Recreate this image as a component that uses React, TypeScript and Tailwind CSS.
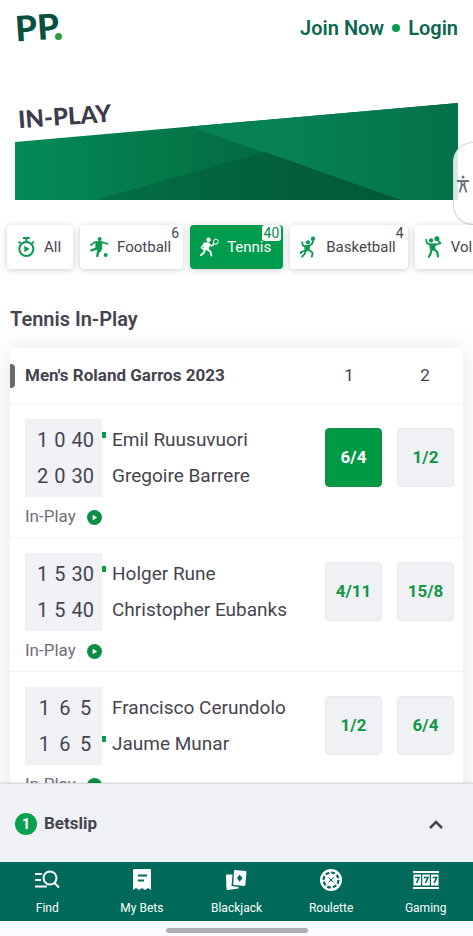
import { useState } from "react";
import type { ReactNode } from "react";

type Player = {
  name: string;
  score: string[];
  odds: string;
  serving?: boolean;
};

type Match = {
  id: string;
  players: Player[];
};

const matches: Match[] = [
  {
    id: "m1",
    players: [
      { name: "Emil Ruusuvuori", score: ["1", "0", "40"], odds: "6/4", serving: true },
      { name: "Gregoire Barrere", score: ["2", "0", "30"], odds: "1/2" },
    ],
  },
  {
    id: "m2",
    players: [
      { name: "Holger Rune", score: ["1", "5", "30"], odds: "4/11", serving: true },
      { name: "Christopher Eubanks", score: ["1", "5", "40"], odds: "15/8" },
    ],
  },
  {
    id: "m3",
    players: [
      { name: "Francisco Cerundolo", score: ["1", "6", "5"], odds: "1/2" },
      { name: "Jaume Munar", score: ["1", "6", "5"], odds: "6/4", serving: true },
    ],
  },
];

function StopwatchIcon() {
  return (
    <svg viewBox="0 0 57 60" className="w-[19px] h-5" fill="none" stroke="currentColor" strokeWidth="6">
      <circle cx="28" cy="36" r="21" />
      <path d="M18 3h20M28 3v12M5 14l6 5M51 14l-6 5" />
      <path d="M22 26l16 10-16 10z" fill="currentColor" stroke="none" />
    </svg>
  );
}

function FootballIcon() {
  return (
    <svg viewBox="0 0 57 60" className="w-[19px] h-5" fill="none" stroke="currentColor" strokeLinecap="round" strokeLinejoin="round">
      <circle cx="29" cy="6" r="6" fill="currentColor" stroke="none" />
      <path d="M3 24l10-8 22-1 18 6" strokeWidth="5" />
      <path d="M18 14h18l-1 22-17 2z" fill="currentColor" strokeWidth="2" />
      <path d="M21 34L4 40M29 34l-5 10-2 13M32 34l-2 8" strokeWidth="7" />
      <circle cx="47" cy="54" r="6" fill="currentColor" stroke="none" />
    </svg>
  );
}

function TennisIcon() {
  return (
    <svg viewBox="0 0 60 60" className="w-[19px] h-5" fill="none" stroke="currentColor" strokeLinecap="round" strokeLinejoin="round">
      <circle cx="27" cy="7" r="7" fill="currentColor" stroke="none" />
      <path d="M13 17l14-1 4 8-6 16-13-3z" fill="currentColor" strokeWidth="2" />
      <path d="M13 19L4 32l7 5M28 20l8 7 6-6" strokeWidth="4" />
      <path d="M16 36l-4 12-9 8M24 38l9 7 3 12" strokeWidth="6" />
      <ellipse cx="50" cy="13" rx="7" ry="8" strokeWidth="3" transform="rotate(25 50 13)" />
      <path d="M46 19l-5 7" strokeWidth="3" />
    </svg>
  );
}

function BasketballIcon() {
  return (
    <svg viewBox="0 0 50 60" className="w-[18px] h-[22px]" fill="none" stroke="currentColor" strokeLinecap="round" strokeLinejoin="round">
      <circle cx="36" cy="7" r="6" fill="currentColor" stroke="none" />
      <circle cx="22" cy="17" r="6" fill="currentColor" stroke="none" />
      <path d="M6 17l2 9 12 2 12-5 5-9" strokeWidth="5" />
      <path d="M14 27l14-1-3 14-11 2z" fill="currentColor" strokeWidth="2" />
      <path d="M17 39L3 44l-1 3M24 38l11 8-2 11M16 38l-2 10-8 9" strokeWidth="5" />
    </svg>
  );
}

function VolleyballIcon() {
  return (
    <svg viewBox="0 0 50 60" className="w-[18px] h-[22px]" fill="none" stroke="currentColor" strokeLinecap="round" strokeLinejoin="round">
      <circle cx="33" cy="7" r="7" fill="currentColor" stroke="none" />
      <circle cx="17" cy="12" r="6" fill="currentColor" stroke="none" />
      <path d="M3 10l3 10 12 4 14-1 11-4-5-5" strokeWidth="5" />
      <path d="M13 22l16-1-2 17-11 2z" fill="currentColor" strokeWidth="2" />
      <path d="M18 38l-2 9-5 10M25 36l9 8 2 12" strokeWidth="6" />
    </svg>
  );
}

const sports: { name: string; count?: number; icon: ReactNode }[] = [
  { name: "All", icon: <StopwatchIcon /> },
  { name: "Football", count: 6, icon: <FootballIcon /> },
  { name: "Tennis", count: 40, icon: <TennisIcon /> },
  { name: "Basketball", count: 4, icon: <BasketballIcon /> },
  { name: "Volleyball", icon: <VolleyballIcon /> },
];

const navItems: { name: string; icon: ReactNode }[] = [
  {
    name: "Find",
    icon: (
      <svg viewBox="0 0 26 22" className="w-[26px] h-[22px]" fill="none" stroke="currentColor" strokeWidth="2">
        <circle cx="16" cy="9" r="6.5" />
        <path d="M20.5 14l4.500 4.500M1 5h7M1 11h6M1 17.500h12" />
      </svg>
    ),
  },
  {
    name: "My Bets",
    icon: (
      <svg viewBox="0 0 18 22" className="w-[18px] h-[22px]" fill="currentColor">
        <path d="M1 0h16a1 1 0 0 1 1 1v20l-3-2-3 2-3-2-3 2-3-2-3 2V1a1 1 0 0 1 1-1z" />
        <path d="M5 6.5h9M5 11.5h6" stroke="#006a5a" strokeWidth="1.8" />
      </svg>
    ),
  },
  {
    name: "Blackjack",
    icon: (
      <svg viewBox="0 0 22 22" className="w-[22px] h-[22px]" fill="currentColor">
        <path d="M2 5.5h5.5l-1 11.5 7 1v1.5l-11 1.5a1 1 0 0 1-1-1L1 6.5a1 1 0 0 1 1-1z" />
        <path d="M9.5 1l11 1a1 1 0 0 1 1 1l-1.2 13a1 1 0 0 1-1 1l-10-1a1 1 0 0 1-1-1l.7-13a1 1 0 0 1 .5-1z" />
        <path d="M14.8 5.5l2.7 3.7-2.9 3.5-2.6-3.7z" fill="#006a5a" />
      </svg>
    ),
  },
  {
    name: "Roulette",
    icon: (
      <svg viewBox="0 0 22 22" className="w-[22px] h-[22px]" fill="none">
        <circle cx="11" cy="11" r="11" fill="currentColor" />
        <circle cx="11" cy="11" r="7.5" stroke="#006a5a" strokeWidth="2.2" strokeDasharray="3.9 1.99" />
        <path d="M8.5 8.5l5 5M13.5 8.5l-5 5" stroke="#006a5a" strokeWidth="1" />
        <circle cx="11" cy="11" r="1.2" fill="#006a5a" />
      </svg>
    ),
  },
  {
    name: "Gaming",
    icon: (
      <svg viewBox="0 0 26 20" className="w-[26px] h-[22px]" fill="currentColor">
        <path d="M0 1h26v2H0zM0 17h26v2H0zM.5 4.5h7.5v11H.5zM9.2 4.5h7.6v11H9.2zM18 4.5h7.5v11H18z" />
        <path d="M2 7.500h4l-2.5 5.5M11 7.5h4l-2.5 5.5M19.700 7.500h4l-2.5 5.5" fill="none" stroke="#006a5a" strokeWidth="1.600" />
      </svg>
    ),
  },
];

function Banner() {
  return (
    <section className="relative px-[15px] pt-[47px]">
      <h1 className="absolute left-[18px] top-11 -rotate-4 font-[Lato,sans-serif] text-2xl font-black text-[#3d3b49]">
        IN-PLAY
      </h1>
      <svg viewBox="0 0 443 97" preserveAspectRatio="none" className="block w-full h-[97px]">
        <defs>
          <linearGradient id="left">
            <stop offset="0" stopColor="#048a58" />
            <stop offset="0.35" stopColor="#047749" />
            <stop offset="0.6" stopColor="#04673f" />
          </linearGradient>
          <linearGradient id="right">
            <stop offset="0" stopColor="#068253" />
            <stop offset="0.4" stopColor="#068153" />
            <stop offset="1" stopColor="#047149" />
          </linearGradient>
          <linearGradient id="floor">
            <stop offset="0" stopColor="#036f45" />
            <stop offset="0.6" stopColor="#025f39" />
            <stop offset="1" stopColor="#025a36" />
          </linearGradient>
        </defs>
        <path d="M0 39L443 0v97H0z" fill="url(#left)" />
        <path d="M175 23.6L443 0v97H385z" fill="url(#right)" />
        <path d="M80 97L250 49l136 48z" fill="url(#floor)" />
      </svg>

      <button
        aria-label="Accessibility"
        className="absolute right-0 top-[86px] w-5 h-[83px] pr-0.5 rounded-l-[20px] border border-r-0 border-gray-300 bg-white/85 flex items-center justify-center text-gray-500"
      >
        <svg viewBox="0 0 12 18" className="shrink-0 w-3 h-[18px]" fill="none" stroke="currentColor" strokeWidth="1.8">
          <circle cx="6" cy="2" r="1.5" fill="currentColor" stroke="none" />
          <path d="M0 6h12M4.5 6v5l-2 6.5M7.5 6v5l2 6.5M4.5 10h3" />
        </svg>
      </button>
    </section>
  );
}

function OddsButton({ label, odds, selected, onClick }: { label: string; odds: string; selected: boolean; onClick: () => void }) {
  return (
    <button
      onClick={onClick}
      aria-label={`${label} ${odds}`}
      aria-pressed={selected}
      className={`w-[57px] h-[59px] rounded border text-[17px] font-bold ${
        selected ? "bg-[#009a44] border-[#158a48] text-white" : "bg-[#f0f1f5] border-[#e9e9ed] text-[#129648]"
      }`}
    >
      {odds}
    </button>
  );
}

export default function App() {
  const [sport, setSport] = useState("Tennis");
  const [picked, setPicked] = useState("m1-0");

  return (
    <div className="h-screen flex flex-col bg-white font-[Roboto,sans-serif] text-[#45444f]">
      <main className="flex-1 min-h-0 overflow-x-hidden overflow-y-auto [scrollbar-width:none]">
        <header className="h-14 px-[15px] flex items-center justify-between">
          <a href="#" aria-label="Home" className="pb-1 flex items-end text-[#06503f]">
            <span className="-rotate-4 font-[Lato,sans-serif] text-[35px] leading-10 font-black">PP</span>
            <span className="-ml-1 mb-1.5 w-[7px] h-[7px] rounded-full bg-[#2f9a41]" />
          </a>
          <div className="flex items-center gap-2 text-xl font-semibold text-[#0b6650]">
            <a href="#">Join Now</a>
            <span className="w-2 h-2 rounded-full bg-[#0a9c50]" />
            <a href="#">Login</a>
          </div>
        </header>

        <Banner />

        {/* sports */}
        <div className="mt-[25px] pl-[7px] flex gap-[7px]">
          {sports.map((s) => (
            <button
              key={s.name}
              onClick={() => setSport(s.name)}
              className={`relative shrink-0 h-11 pl-2.5 pr-3 rounded flex items-center gap-2 text-[15px] shadow-[0_1px_6px_rgba(0,0,0,0.2)] ${
                sport === s.name ? "bg-[#009c4d] text-white" : "bg-white text-[#45444f]"
              }`}
            >
              <span className={sport === s.name ? "text-white" : "text-[#0b9a50]"}>{s.icon}</span>
              {s.name}
              {s.count && (
                <span
                  className={`absolute right-0.5 top-0 px-0.5 rounded-[3px] text-sm leading-4 ${
                    sport === s.name ? "bg-white text-[#0b8a4a]" : ""
                  }`}
                >
                  {s.count}
                </span>
              )}
            </button>
          ))}
        </div>

        <h2 className="mt-9 mb-[15px] px-2.5 text-xl leading-7 font-semibold">Tennis In-Play</h2>

        <section className="mx-2.5 rounded bg-white shadow-[0_0_24px_rgba(0,0,0,0.1)]">
          <div className="h-14 pr-2 flex items-center border-b border-[#f3f3f5]">
            <span className="w-[5px] h-6 rounded-r bg-[#6b6b6b]" />
            <h3 className="flex-1 pl-2.5 text-[17px] font-bold">Men's Roland Garros 2023</h3>
            <div className="flex gap-4 text-[17px] text-center">
              <span className="w-[60px]">1</span>
              <span className="w-[60px]">2</span>
            </div>
          </div>

          {matches.map((m) => (
            <article key={m.id} className="h-[134px] pl-[15px] pr-[9px] pt-[15px] flex border-b border-[#f3f3f5]">
              <div className="flex-1">
                <div className="flex">
                  <div className="w-[77px] h-[78px] pl-[9px] pr-1.5 py-[3px] bg-[#f2f1f6]">
                    <table className="w-full text-xl text-center">
                      <tbody>
                        {m.players.map((p) => (
                          <tr key={p.name} className="h-9">
                            {p.score.map((n, i) => (
                              <td key={i} className="px-[3px]">
                                {n}
                              </td>
                            ))}
                          </tr>
                        ))}
                      </tbody>
                    </table>
                  </div>
                  <ul className="py-[3px] text-[19px] leading-9">
                    {m.players.map((p) => (
                      <li key={p.name} className="h-9 flex">
                        <span className={`mt-2.5 mr-1.5 w-1 h-1.5 ${p.serving ? "bg-[#0c9c4a]" : ""}`} />
                        {p.name}
                      </li>
                    ))}
                  </ul>
                </div>
                <p className="h-10 flex items-center gap-[11px] text-[17px] text-[#707078]">
                  In-Play
                  <svg viewBox="0 0 15 15" className="w-[15px] h-[15px]">
                    <circle cx="7.5" cy="7.5" r="7.5" fill="#0a8f45" />
                    <path d="M5.7 4.8l4.5 2.7-4.5 2.7z" fill="#fff" />
                  </svg>
                </p>
              </div>
              <div className="pt-[9px] flex gap-[15px]">
                {m.players.map((p, i) => (
                  <OddsButton
                    key={p.name}
                    label={p.name}
                    odds={p.odds}
                    selected={picked === `${m.id}-${i}`}
                    onClick={() => setPicked(picked === `${m.id}-${i}` ? "" : `${m.id}-${i}`)}
                  />
                ))}
              </div>
            </article>
          ))}
        </section>
      </main>

      {/* betslip */}
      <button className="h-[79px] px-[15px] pt-0.5 flex items-center gap-[7px] border-t border-[#d8dadd] bg-[#eff1f5] text-[17px] font-bold shadow-[0_-1px_2px_rgba(0,0,0,0.08)]">
        <span className="w-[22px] h-[22px] rounded-full bg-[#07a04e] text-white text-[15px] leading-[22px]">
          {picked ? 1 : 0}
        </span>
        Betslip
        <svg viewBox="0 0 14 9" className="ml-auto mr-[15px] w-3.5 h-[9px]" fill="none" stroke="currentColor" strokeWidth="2.5">
          <path d="M1 8l6-6 6 6" />
        </svg>
      </button>

      <nav className="h-[59px] grid grid-cols-5 bg-[#006a5a] text-white">
        {navItems.map((n) => (
          <a key={n.name} href="#" className="pt-[7px] flex flex-col items-center gap-[9px] text-xs">
            {n.icon}
            {n.name}
          </a>
        ))}
      </nav>
      <div className="h-[15px] flex items-center justify-center bg-[#fbfafe]">
        <span className="mt-1 w-[142px] h-[5px] rounded-full bg-[#b1afb4]" />
      </div>
    </div>
  );
}
